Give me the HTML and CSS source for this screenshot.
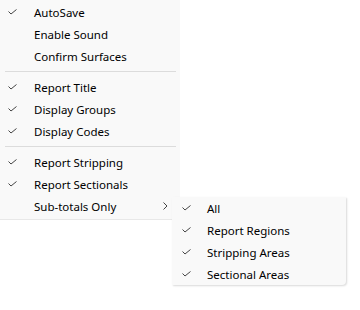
FILE: index.html
```html
<!DOCTYPE html>
<html lang="en">
<head>
    <meta charset="UTF-8">
    <title>Report Options Menu</title>
    <link rel="stylesheet" href="styles.css">
</head>
<body>
    <div class="menu">
        <div class="item"><span class="check"><svg width="9" height="6" viewBox="0 0 9 6"><path d="M0.5 2.5 L3 5 L8.5 0.5"/></svg></span>AutoSave</div>
        <div class="item"><span class="check"></span>Enable Sound</div>
        <div class="item"><span class="check"></span>Confirm Surfaces</div>
        <div class="separator"></div>
        <div class="item"><span class="check"><svg width="9" height="6" viewBox="0 0 9 6"><path d="M0.5 2.5 L3 5 L8.5 0.5"/></svg></span>Report Title</div>
        <div class="item"><span class="check"><svg width="9" height="6" viewBox="0 0 9 6"><path d="M0.5 2.5 L3 5 L8.5 0.5"/></svg></span>Display Groups</div>
        <div class="item"><span class="check"><svg width="9" height="6" viewBox="0 0 9 6"><path d="M0.5 2.5 L3 5 L8.5 0.5"/></svg></span>Display Codes</div>
        <div class="separator"></div>
        <div class="item"><span class="check"><svg width="9" height="6" viewBox="0 0 9 6"><path d="M0.5 2.5 L3 5 L8.5 0.5"/></svg></span>Report Stripping</div>
        <div class="item"><span class="check"><svg width="9" height="6" viewBox="0 0 9 6"><path d="M0.5 2.5 L3 5 L8.5 0.5"/></svg></span>Report Sectionals</div>
        <div class="item">
            <span class="check"></span>Sub-totals Only
            <svg class="chevron" width="5" height="8" viewBox="0 0 5 8"><path d="M0.5 0.5 L4 4 L0.5 7.5"/></svg>
        </div>
    </div>

    <div class="submenu">
        <div class="item"><span class="check"><svg width="9" height="6" viewBox="0 0 9 6"><path d="M0.5 2.5 L3 5 L8.5 0.5"/></svg></span>All</div>
        <div class="item"><span class="check"><svg width="9" height="6" viewBox="0 0 9 6"><path d="M0.5 2.5 L3 5 L8.5 0.5"/></svg></span>Report Regions</div>
        <div class="item"><span class="check"><svg width="9" height="6" viewBox="0 0 9 6"><path d="M0.5 2.5 L3 5 L8.5 0.5"/></svg></span>Stripping Areas</div>
        <div class="item"><span class="check"><svg width="9" height="6" viewBox="0 0 9 6"><path d="M0.5 2.5 L3 5 L8.5 0.5"/></svg></span>Sectional Areas</div>
    </div>
</body>
</html>
```

FILE: styles.css
```css
html,
body {
    height: 100%;
}

body {
    margin: 0;
    min-height: 310px;
    position: relative;
    background-color: #fff;
    font-family: "Noto Sans", "Open Sans", sans-serif;
    font-size: 11.5px;
    color: #000;
}

.menu {
    width: 180px;
    background-color: #f9f9f9;
    padding: 1px 0 2px;
    border-bottom: 1px solid #e8e8e8;
}

.item {
    display: flex;
    align-items: center;
    height: 22px;
    white-space: nowrap;
}

.check {
    width: 34px;
    padding-left: 8px;
    box-sizing: border-box;
    display: flex;
    align-items: center;
}

.check svg path,
.chevron path {
    fill: none;
    stroke: #444;
    stroke-width: 1;
}

.chevron {
    margin-left: auto;
    margin-right: 12px;
}

.separator {
    height: 1px;
    background-color: #dcdcdc;
    margin: 4px 4px 4px 5px;
}

/* flyout for "Sub-totals Only", sits over the main menu */
.submenu {
    position: absolute;
    left: 172px;
    top: 197px;
    width: 174px;
    background-color: #f9f9f9;
    box-shadow: 1px 1px 2px rgba(0, 0, 0, 0.15);
    border-radius: 0 0 4px 0;
}

.submenu .check {
    width: 35px;
    padding-left: 10px;
}
```
